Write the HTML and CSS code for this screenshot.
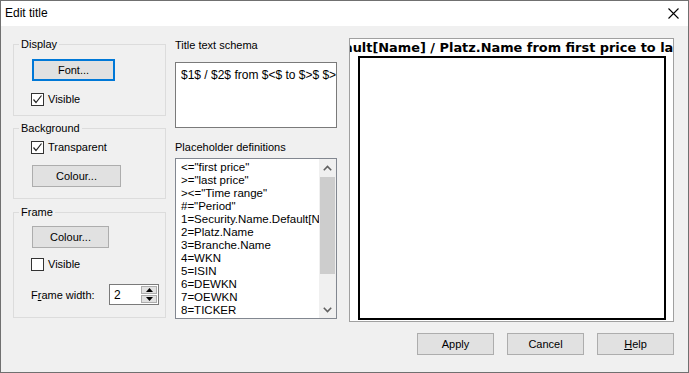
FILE: index.html
```html
<!DOCTYPE html>
<html lang="en">
<head>
    <meta charset="UTF-8">
    <title>Edit title</title>
    <link rel="stylesheet" href="styles.css">
</head>
<body>

<div class="window">
    <div class="titlebar">
        <span class="caption">Edit title</span>
        <svg class="close" width="11" height="11" viewBox="0 0 11 11">
            <path d="M0.5 0.5 L10.5 10.5 M10.5 0.5 L0.5 10.5" stroke="#000" stroke-width="1.1" fill="none"/>
        </svg>
    </div>

    <div class="main">
        <div class="columns">
            <div class="col-left">
                <fieldset class="group group-display">
                    <legend>Display</legend>
                    <div class="group-body">
                        <button class="btn btn-default btn-font">Font...</button>
                        <label class="check check-display">
                            <span class="box checked">
                                <svg width="11" height="11" viewBox="0 0 11 11"><path d="M1.5 5.5 L4 8.5 L9.5 1.5" stroke="#222" stroke-width="1.2" fill="none"/></svg>
                            </span>
                            Visible
                        </label>
                    </div>
                </fieldset>

                <fieldset class="group group-background">
                    <legend>Background</legend>
                    <div class="group-body">
                        <label class="check check-bg">
                            <span class="box checked">
                                <svg width="11" height="11" viewBox="0 0 11 11"><path d="M1.5 5.5 L4 8.5 L9.5 1.5" stroke="#222" stroke-width="1.2" fill="none"/></svg>
                            </span>
                            Transparent
                        </label>
                        <button class="btn btn-colour-bg">Colour...</button>
                    </div>
                </fieldset>

                <fieldset class="group group-frame">
                    <legend>Frame</legend>
                    <div class="group-body">
                        <button class="btn btn-colour-frame">Colour...</button>
                        <label class="check check-frame">
                            <span class="box"></span>
                            Visible
                        </label>
                        <div class="width-row">
                            <span class="width-label">F<u>r</u>ame width:</span>
                            <div class="spin">
                                <span class="spin-value">2</span>
                                <div class="spin-buttons">
                                    <span class="spin-btn"><svg width="7" height="4" viewBox="0 0 7 4"><path d="M0 4 L3.5 0 L7 4 Z" fill="#000"/></svg></span>
                                    <span class="spin-btn"><svg width="7" height="4" viewBox="0 0 7 4"><path d="M0 0 L3.5 4 L7 0 Z" fill="#000"/></svg></span>
                                </div>
                            </div>
                        </div>
                    </div>
                </fieldset>
            </div>

            <div class="col-middle">
                <div class="field-label">Title text schema</div>
                <div class="schema-box">$1$ / $2$ from $&lt;$ to $&gt;$ $&gt;&lt;$</div>

                <div class="field-label label-placeholders">Placeholder definitions</div>
                <div class="listbox">
                    <ul class="list-items">
                        <li>&lt;="first price"</li>
                        <li>&gt;="last price"</li>
                        <li>&gt;&lt;="Time range"</li>
                        <li>#="Period"</li>
                        <li>1=Security.Name.Default[Name]</li>
                        <li>2=Platz.Name</li>
                        <li>3=Branche.Name</li>
                        <li>4=WKN</li>
                        <li>5=ISIN</li>
                        <li>6=DEWKN</li>
                        <li>7=OEWKN</li>
                        <li>8=TICKER</li>
                    </ul>
                    <div class="scrollbar">
                        <span class="arrow"><svg width="9" height="6" viewBox="0 0 9 6"><path d="M0.8 5.2 L4.5 1.5 L8.2 5.2" stroke="#606060" stroke-width="1.6" fill="none"/></svg></span>
                        <div class="track"><div class="thumb"></div></div>
                        <span class="arrow"><svg width="9" height="6" viewBox="0 0 9 6"><path d="M0.8 0.8 L4.5 4.5 L8.2 0.8" stroke="#606060" stroke-width="1.6" fill="none"/></svg></span>
                    </div>
                </div>
            </div>

            <div class="col-preview">
                <div class="preview">
                    <div class="preview-title"><span>Security.Name.Default[Name] / Platz.Name from first price to last price Time range</span></div>
                    <div class="preview-frame"></div>
                </div>
            </div>
        </div>

        <div class="actions">
            <button class="btn btn-action">Apply</button>
            <button class="btn btn-action">Cancel</button>
            <button class="btn btn-action"><u>H</u>elp</button>
        </div>
    </div>
</div>

</body>
</html>
```

FILE: styles.css
```css
* {
    box-sizing: border-box;
}

body {
    margin: 0;
    font-family: 'Liberation Sans', Arial, sans-serif;
    font-size: 11px;
    color: #000;
    background-color: #fff;
}

.window {
    width: 689px;
    height: 373px;
    border: 1px solid #707070;
    background-color: #f0f0f0;
}

.titlebar {
    height: 25px;
    background-color: #fff;
    display: flex;
    align-items: center;
    justify-content: space-between;
    padding: 0 9px 1px 4px;
}

.caption {
    font-size: 12px;
}

.close {
    margin-top: 1px;
}

.main {
    padding: 11px 14px 0 12px;
}

.columns {
    display: flex;
    gap: 9px;
}

/* left column: group boxes */
.col-left {
    width: 153px;
}

.group {
    margin: 0;
    border: 1px solid #dcdcdc;
    padding: 0 0 0 5px;
    min-width: 0;
}

.group legend {
    padding: 0 2px;
    line-height: 14px;
}

.group-body {
    padding-left: 13px;
    display: flex;
    flex-direction: column;
    align-items: flex-start;
}

.group-display {
    padding-bottom: 8px;
}

.group-background {
    margin-top: 5px;
    padding-bottom: 11px;
}

.group-frame {
    margin-top: 6px;
    padding-bottom: 12px;
}

.btn {
    font-family: 'Liberation Sans', Arial, sans-serif;
    font-size: 11px;
    color: #000;
    height: 22px;
    background-color: #e1e1e1;
    border: 1px solid #adadad;
    padding: 0;
}

.btn-default {
    border: 2px solid #0078d7;
}

.btn-font {
    width: 83px;
    margin-top: 8px;
}

.btn-colour-bg {
    width: 89px;
    margin-top: 10px;
}

.btn-colour-frame {
    width: 77px;
    margin-top: 7px;
}

.check {
    display: flex;
    align-items: center;
    gap: 4px;
    height: 16px;
    margin-left: -1px;
}

.check-display {
    margin-top: 10px;
}

.check-bg {
    margin-top: 4px;
}

.check-frame {
    margin-top: 8px;
}

.box {
    width: 13px;
    height: 13px;
    border: 1px solid #333;
    background-color: #fff;
    display: flex;
    align-items: center;
    justify-content: center;
}

.width-row {
    display: flex;
    align-items: center;
    margin-top: 12px;
    margin-left: -1px;
}

.width-label {
    width: 78px;
}

.width-label u {
    text-decoration-thickness: 1px;
}

.spin {
    width: 50px;
    height: 21px;
    border: 1px solid #7a7a7a;
    background-color: #fff;
    display: flex;
    justify-content: space-between;
    padding: 1px;
}

.spin-value {
    padding: 2px 0 0 3px;
    font-size: 12px;
}

.spin-buttons {
    display: flex;
    flex-direction: column;
    gap: 1px;
    width: 16px;
}

.spin-btn {
    flex: 1;
    background-color: #e1e1e1;
    border: 1px solid #adadad;
    display: flex;
    align-items: center;
    justify-content: center;
}

/* middle column */
.col-middle {
    width: 162px;
}

.field-label {
    line-height: 14px;
    margin-top: 1px;
}

.schema-box {
    margin-top: 10px;
    height: 66px;
    border: 1px solid #7a7a7a;
    background-color: #fff;
    padding: 5px 5px;
    font-size: 12px;
    white-space: nowrap;
    overflow: hidden;
}

.label-placeholders {
    margin-top: 12px;
}

.listbox {
    margin-top: 4px;
    height: 161px;
    border: 1px solid #828790;
    background-color: #fff;
    display: flex;
    overflow: hidden;
}

.list-items {
    list-style: none;
    margin: 0;
    padding: 2px 0 0 5px;
    flex: 1;
    min-width: 0;
    overflow: hidden;
    white-space: nowrap;
    line-height: 13px;
    font-size: 11.5px;
}

.scrollbar {
    width: 17px;
    background-color: #f0f0f0;
    display: flex;
    flex-direction: column;
}

.arrow {
    height: 17px;
    display: flex;
    align-items: center;
    justify-content: center;
}

.track {
    flex: 1;
    padding-top: 1px;
}

.thumb {
    margin: 0 1px;
    height: 97px;
    background-color: #cdcdcd;
}

/* preview */
.col-preview {
    width: 325px;
    margin-left: 3px;
}

.preview {
    margin-top: 1px;
    height: 284px;
    border: 1px solid #a0a0a0;
    background-color: #fff;
    display: flex;
    flex-direction: column;
}

.preview-title {
    height: 17px;
    display: flex;
    justify-content: center;
    align-items: center;
    overflow: hidden;
    white-space: nowrap;
    font-family: 'DejaVu Sans', Verdana, sans-serif;
    font-weight: bold;
    font-size: 12.9px;
}

.preview-frame {
    flex: 1;
    margin: 0 7px 1px 8px;
    border: 2px solid #000;
}

/* bottom buttons */
.actions {
    display: flex;
    justify-content: flex-end;
    gap: 13px;
    margin-top: 11px;
}

.btn-action {
    width: 77px;
}
```
